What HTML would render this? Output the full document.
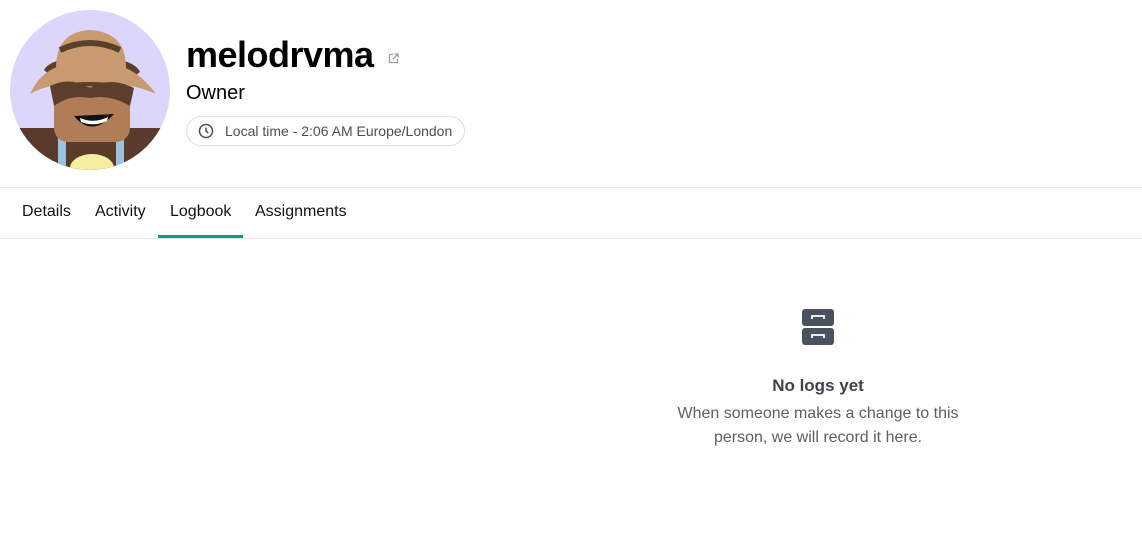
<!DOCTYPE html>
<html><head><meta charset="utf-8"><style>
*{margin:0;padding:0;box-sizing:border-box}
body{width:1142px;height:548px;background:#fff;font-family:"Liberation Sans",sans-serif;position:relative;overflow:hidden;color:#000}
.abs{position:absolute}
.name{left:186px;top:34px;font-size:36px;font-weight:bold;letter-spacing:-0.5px}
.role{left:186px;top:82px;font-size:20px}
.pill{left:186px;top:116px;width:279px;height:30px;border:1px solid #dcdfe3;border-radius:15px;font-size:14px;color:#4a4f55;padding-left:38px;line-height:28px}
.tabs{top:187px;left:0;width:1142px;height:52px;border-top:1px solid #e3e5e8;border-bottom:1px solid #e3e5e8}
.tab{position:absolute;top:15px;font-size:16px;color:#111}
.ul{left:158px;top:235px;width:85px;height:3px;background:#17987f}
.t1{left:0;width:1142px;text-align:center}
</style></head><body>
<svg class="abs" style="left:10px;top:10px" width="160" height="160" viewBox="0 0 160 160">
<defs><clipPath id="c"><circle cx="80" cy="80" r="80"/></clipPath></defs>
<g clip-path="url(#c)">
<rect width="160" height="160" fill="#dcd6fc"/>
<rect x="0" y="118" width="160" height="42" fill="#5a3a2a"/>
<rect x="48" y="118" width="8" height="42" fill="#9cc3de"/>
<rect x="106" y="118" width="8" height="42" fill="#9cc3de"/>
<ellipse cx="82" cy="158" rx="22" ry="14" fill="#f3ef9e"/>
<rect x="44" y="70" width="76" height="62" rx="14" fill="#b07d56"/>
<path d="M64 106 Q82 128 104 104 Z" fill="#111"/>
<path d="M70 108 Q84 114 98 107 L97 111 Q84 117 71 112Z" fill="#fff"/>
<path d="M34 60 Q40 48 80 46 Q124 48 130 62 Q110 78 80 76 Q50 76 34 60Z" fill="#5b3f2c"/>
<path d="M20 84 Q30 62 50 56 L110 56 Q130 62 146 84 Q120 72 80 72 Q40 72 20 84Z" fill="#c99a6f"/>
<path d="M46 58 Q46 22 80 20 Q116 22 116 58 Z" fill="#c99a6f"/>
<path d="M50 40 Q80 26 110 40" stroke="#5a3f2b" stroke-width="6" fill="none"/>
<path d="M40 76 Q60 66 80 78 Q100 66 124 78 L120 96 Q100 84 80 88 Q60 84 44 96Z" fill="#5b3f2c"/>
</g></svg>
<div class="abs name">melodrvma</div>
<svg class="abs" style="left:388px;top:53px" width="11" height="11" viewBox="0 0 11 11" fill="none" stroke="#9aa0a6" stroke-width="1.3"><path d="M5 1.5H1.5v8h8V6"/><path d="M6.5 1h3.5v3.5M10 1 5 6"/></svg>
<div class="abs role">Owner</div>
<div class="abs pill">Local time - 2:06 AM Europe/London</div>
<svg class="abs" style="left:198px;top:123px" width="16" height="16" viewBox="0 0 16 16" fill="none" stroke="#4a4f55" stroke-width="1.5"><circle cx="8" cy="8" r="6.5"/><path d="M8 4.5V8l2.3 2"/></svg>
<div class="abs tabs">
<div class="tab" style="left:22px">Details</div>
<div class="tab" style="left:95px">Activity</div>
<div class="tab" style="left:170px">Logbook</div>
<div class="tab" style="left:255px">Assignments</div>
</div>
<div class="abs ul"></div>
<svg class="abs" style="left:802px;top:309px" width="32" height="36" viewBox="0 0 32 36">
<rect x="0" y="0" width="32" height="17" rx="3" fill="#4a5260"/>
<rect x="0" y="19" width="32" height="17" rx="3" fill="#4a5260"/>
<path d="M10 10V7h12v3M10 29v-3h12v3" stroke="#fff" stroke-width="1.8" fill="none"/>
</svg>
<div class="abs" style="left:0;top:376px;width:1636px;text-align:center;font-size:17px;font-weight:bold;color:#3d434b">No logs yet</div>
<div class="abs" style="left:0;top:402px;width:1636px;text-align:center;font-size:16px;color:#5a6068;line-height:24px">When someone makes a change to this<br>person, we will record it here.</div>
</body></html>
